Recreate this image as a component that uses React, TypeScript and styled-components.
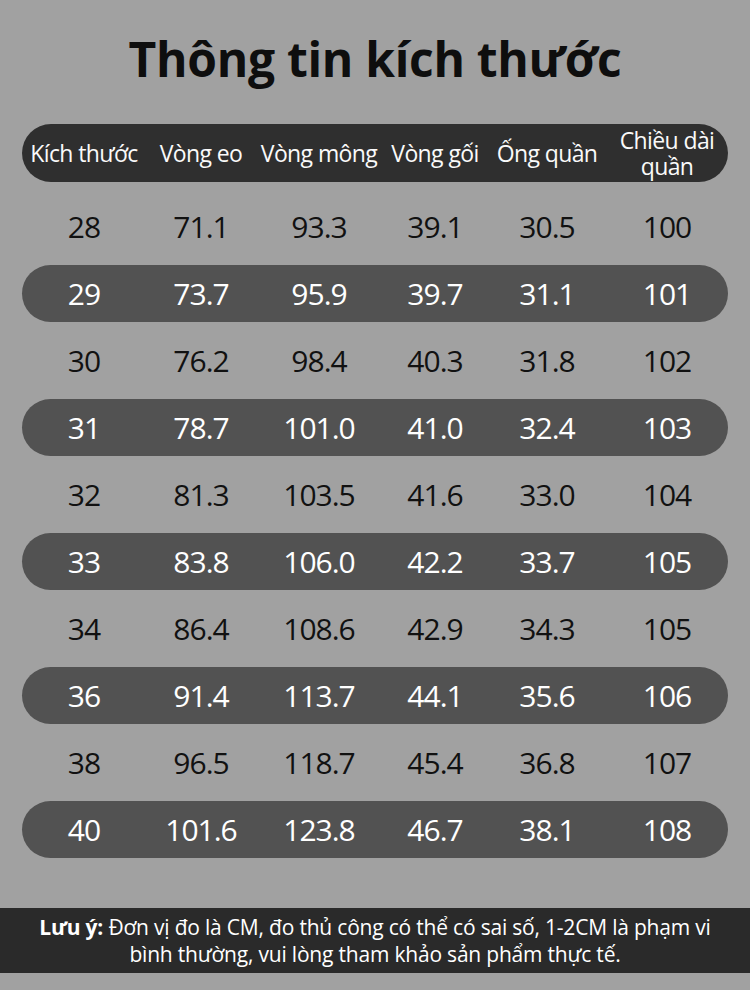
import React from "react";
import styled, { createGlobalStyle } from "styled-components";

const Global = createGlobalStyle`
  html, body { margin: 0; padding: 0; background: #a0a0a0; }
  body { font-family: "Open Sans", "Noto Sans", sans-serif; }
`;

const Page = styled.div`
  width: 750px;
  height: 990px;
  background: #a1a1a1;
  display: flex;
  flex-direction: column;
  align-items: center;
  overflow: hidden;
`;

const Title = styled.h1`
  margin: 27px 0 0;
  font-family: "Open Sans", "Noto Sans", sans-serif;
  font-weight: 700;
  font-size: 48px;
  line-height: 64px;
  letter-spacing: -0.3px;
  color: #0e0e0e;
`;

const Table = styled.div`
  width: 706px;
  margin-top: 33px;
  display: flex;
  flex-direction: column;
  gap: 10px;
`;

const cols = "124px 110px 126px 106px 118px 122px";

const HeaderBar = styled.div`
  display: grid;
  grid-template-columns: ${cols};
  align-items: center;
  height: 58px;
  border-radius: 29px;
  background: #2f2f2f;
  margin-bottom: 6px;
`;

const HeadCell = styled.div`
  text-align: center;
  color: #fafafa;
  font-family: "Open Sans", "Noto Sans", sans-serif;
  font-size: 23px;
  line-height: 26px;
  letter-spacing: -0.6px;
  white-space: pre-line;
`;

const Row = styled.div<{ $dark: boolean }>`
  display: grid;
  grid-template-columns: ${cols};
  align-items: center;
  height: 57px;
  border-radius: 29px;
  background: ${(p) => (p.$dark ? "#525252" : "transparent")};
  color: ${(p) => (p.$dark ? "#ffffff" : "#111111")};
`;

const Cell = styled.div`
  text-align: center;
  font-family: "Open Sans", "Noto Sans", sans-serif;
  font-size: 30px;
  letter-spacing: -1px;
`;

const Note = styled.div`
  margin-top: auto;
  margin-bottom: 17px;
  width: 100%;
  height: 65px;
  box-sizing: border-box;
  background: #2a2a2a;
  color: #ffffff;
  display: flex;
  align-items: center;
  justify-content: center;
  text-align: center;
  padding: 0 22px;
  font-family: "Open Sans", "Noto Sans", sans-serif;
  font-size: 21px;
  line-height: 27px;
  letter-spacing: -0.2px;
`;

const NoteLabel = styled.b`
  font-weight: 700;
`;

const headers = ["Kích thước", "Vòng eo", "Vòng mông", "Vòng gối", "Ống quần", "Chiều dài\nquần"];

const rows: string[][] = [
  ["28", "71.1", "93.3", "39.1", "30.5", "100"],
  ["29", "73.7", "95.9", "39.7", "31.1", "101"],
  ["30", "76.2", "98.4", "40.3", "31.8", "102"],
  ["31", "78.7", "101.0", "41.0", "32.4", "103"],
  ["32", "81.3", "103.5", "41.6", "33.0", "104"],
  ["33", "83.8", "106.0", "42.2", "33.7", "105"],
  ["34", "86.4", "108.6", "42.9", "34.3", "105"],
  ["36", "91.4", "113.7", "44.1", "35.6", "106"],
  ["38", "96.5", "118.7", "45.4", "36.8", "107"],
  ["40", "101.6", "123.8", "46.7", "38.1", "108"],
];

export default function App() {
  return (
    <Page>
      <Global />
      <Title>Thông tin kích thước</Title>
      <Table>
        <HeaderBar>
          {headers.map((h) => (
            <HeadCell key={h}>{h}</HeadCell>
          ))}
        </HeaderBar>
        {rows.map((r, i) => (
          <Row key={r[0]} $dark={i % 2 === 1}>
            {r.map((c, j) => (
              <Cell key={j}>{c}</Cell>
            ))}
          </Row>
        ))}
      </Table>
      <Note>
        <span>
          <NoteLabel>Lưu ý:</NoteLabel> Đơn vị đo là CM, đo thủ công có thể có sai số, 1-2CM là phạm vi
          bình thường, vui lòng tham khảo sản phẩm thực tế.
        </span>
      </Note>
    </Page>
  );
}
